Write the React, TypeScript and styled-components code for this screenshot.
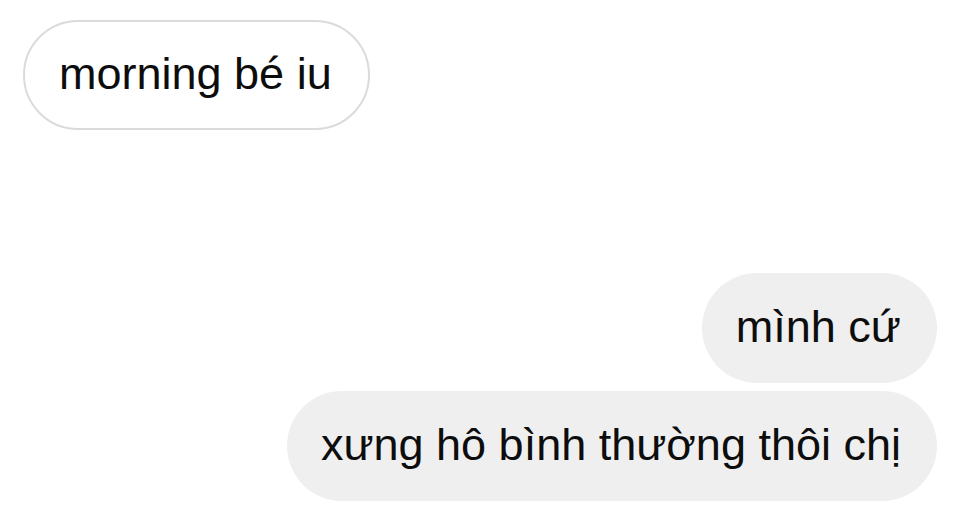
import React from "react";
import styled, { createGlobalStyle } from "styled-components";

const Global = createGlobalStyle`
  html, body { margin: 0; padding: 0; background: #ffffff; }
  body { font-family: "Liberation Sans", Arial, sans-serif; }
`;

const Page = styled.div`
  width: 960px;
  height: 525px;
  background: #ffffff;
  display: flex;
  flex-direction: column;
  padding: 20px 23px 0 23px;
  box-sizing: border-box;
  overflow: hidden;
`;

const Group = styled.div<{ $side: "left" | "right"; $top?: number }>`
  display: flex;
  flex-direction: column;
  align-items: ${(p) => (p.$side === "left" ? "flex-start" : "flex-end")};
  gap: 8px;
  margin-top: ${(p) => p.$top ?? 0}px;
`;

const Bubble = styled.div<{ $variant: "received" | "sent" }>`
  height: 110px;
  box-sizing: border-box;
  display: flex;
  align-items: center;
  padding: 0 36px 2px 34px;
  border-radius: 55px;
  font-size: 45px;
  color: #0d0d0d;
  white-space: nowrap;
  background: ${(p) => (p.$variant === "sent" ? "#efefef" : "#ffffff")};
  border: ${(p) => (p.$variant === "received" ? "2px solid #dbdbdb" : "none")};
`;

export default function App() {
  return (
    <>
      <Global />
      <Page>
        <Group $side="left">
          <Bubble $variant="received">morning bé iu</Bubble>
        </Group>
        <Group $side="right" $top={143}>
          <Bubble $variant="sent">mình cứ</Bubble>
          <Bubble $variant="sent">xưng hô bình thường thôi chị</Bubble>
        </Group>
      </Page>
    </>
  );
}
